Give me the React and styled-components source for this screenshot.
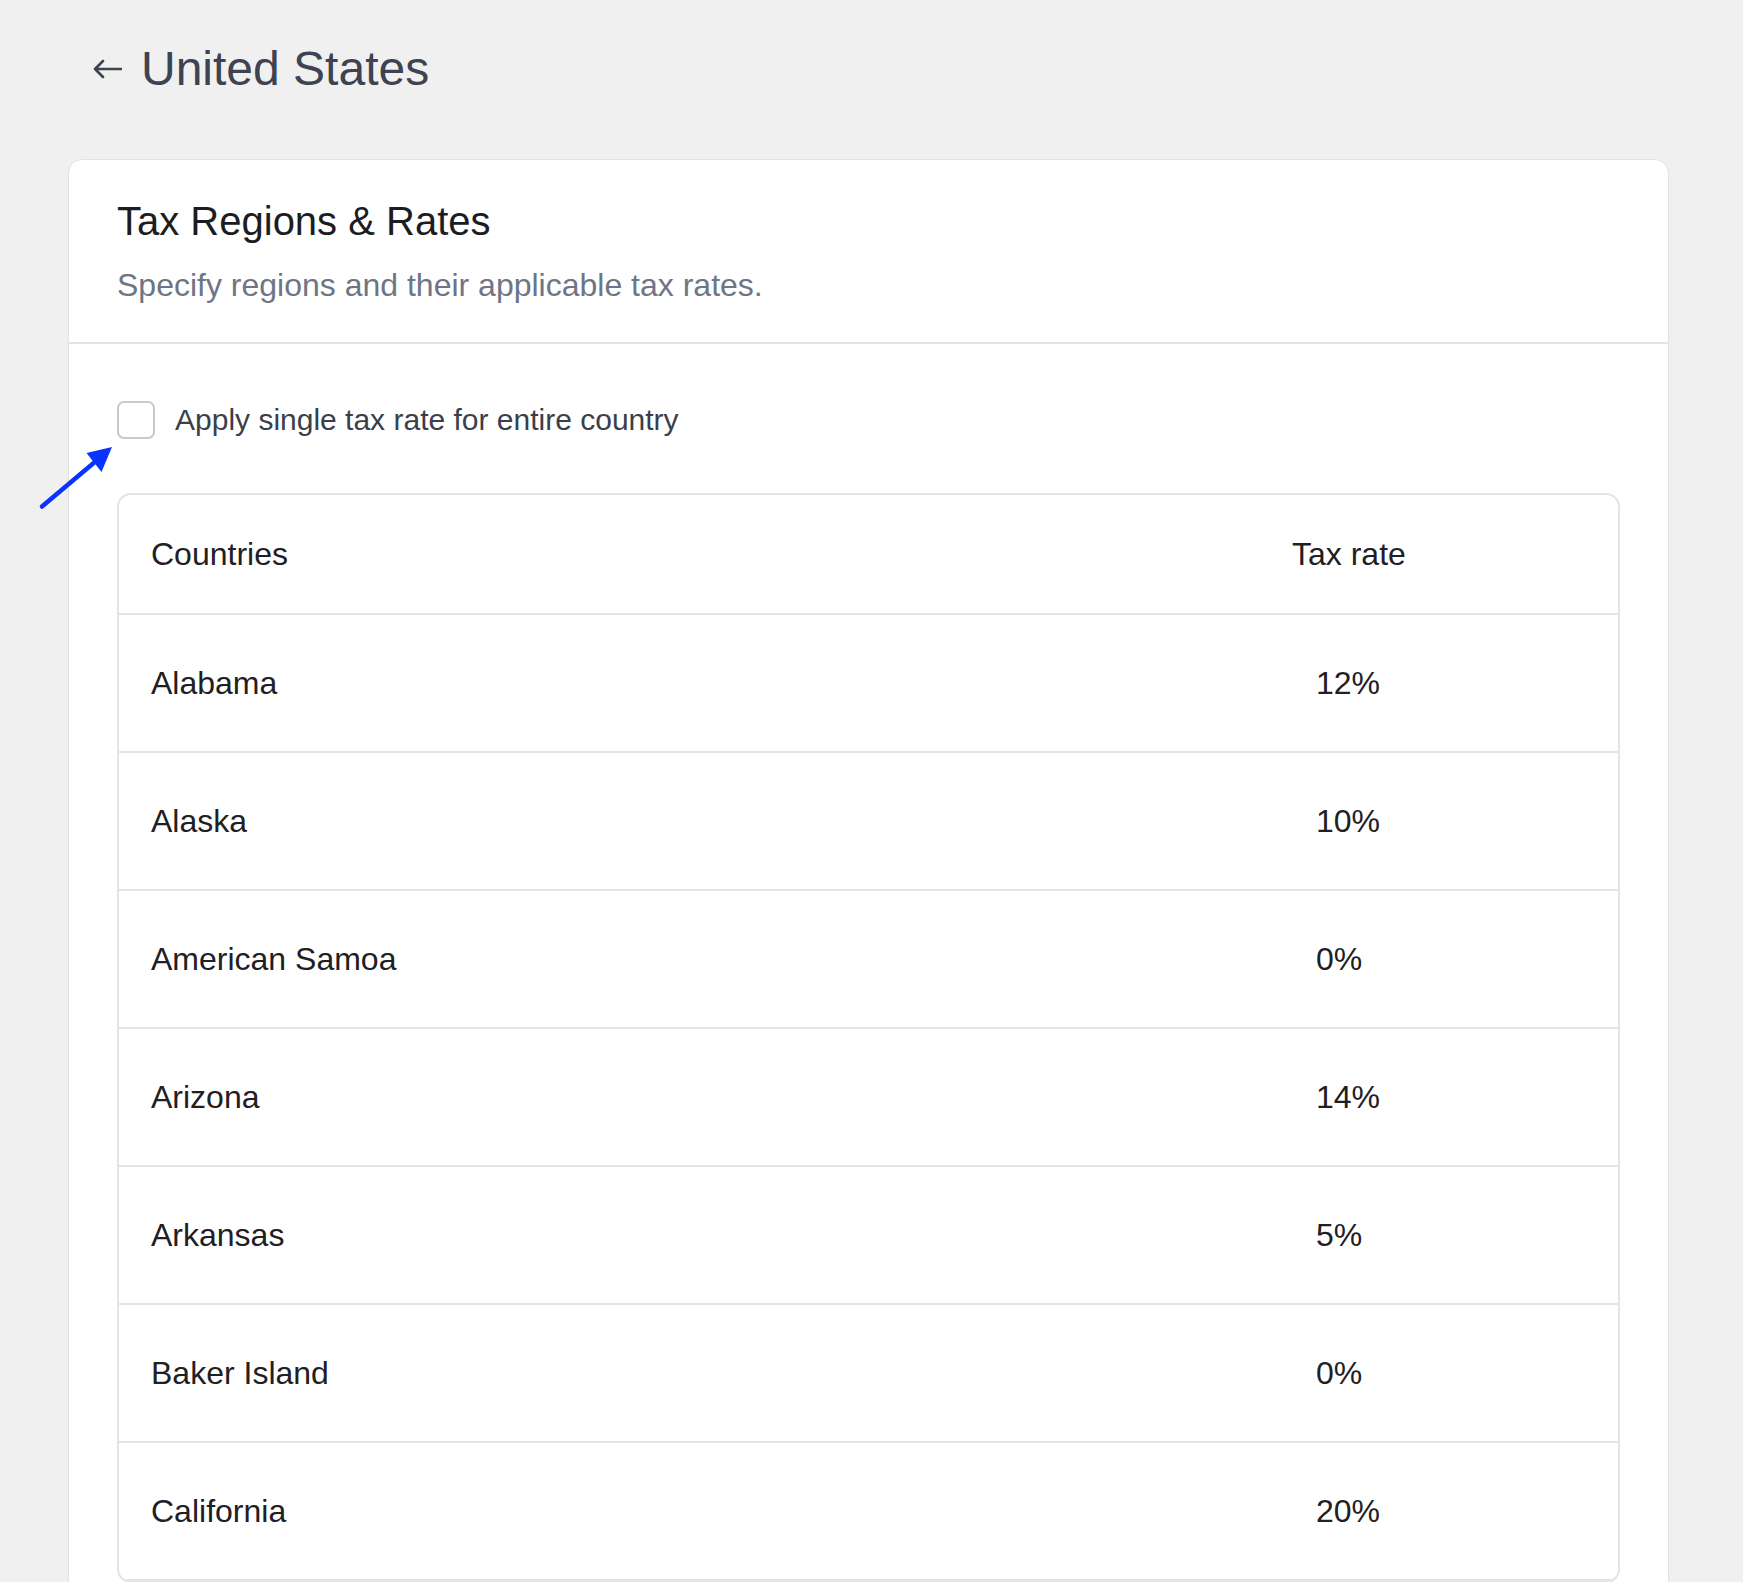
import React from "react";
import styled, { createGlobalStyle } from "styled-components";

const GlobalStyle = createGlobalStyle`
  html, body {
    margin: 0;
    padding: 0;
    background: #f0f0f0;
  }
  body {
    font-family: "Liberation Sans", Arial, Helvetica, sans-serif;
    -webkit-font-smoothing: antialiased;
  }
`;

const Page = styled.div`
  position: relative;
  min-height: 100vh;
  padding: 40px 74px 80px 68px;
  box-sizing: border-box;
  background: #f0f0f0;
`;

const Header = styled.div`
  display: flex;
  align-items: center;
  gap: 19px;
  padding-left: 25px;
  margin-bottom: 61px;
`;

const BackButton = styled.button`
  display: flex;
  align-items: center;
  padding: 0;
  border: none;
  background: transparent;
  cursor: pointer;
  color: #3d4350;
`;

const PageTitle = styled.h1`
  margin: 0;
  font-size: 48px;
  line-height: 1.2;
  font-weight: 400;
  color: #3d4350;
`;

const Card = styled.section`
  background: #ffffff;
  border: 1px solid #e3e3e3;
  border-radius: 14px;
  box-shadow: 0 1px 2px rgba(0, 0, 0, 0.04);
`;

const CardHeader = styled.div`
  padding: 37px 48px 33px;
  border-bottom: 2px solid #e1e4e9;
`;

const CardTitle = styled.h2`
  margin: 0;
  font-size: 40px;
  line-height: 48px;
  font-weight: 400;
  color: #1c1d21;
`;

const CardSubtitle = styled.p`
  margin: 16px 0 0;
  font-size: 32px;
  line-height: 48px;
  color: #6e7585;
`;

const CardBody = styled.div`
  padding: 52px 48px 48px;
`;

const CheckRow = styled.label`
  display: flex;
  align-items: center;
  gap: 20px;
  cursor: pointer;
`;

const CheckBox = styled.span`
  width: 38px;
  height: 38px;
  box-sizing: border-box;
  border: 2px solid #c7cacf;
  border-radius: 7px;
  background: ${(p) => (p.checked ? "#2f6fed" : "#ffffff")};
`;

const CheckLabel = styled.span`
  font-size: 30px;
  line-height: 48px;
  color: #3a3f4b;
`;

const Table = styled.div`
  margin-top: 49px;
  border: 2px solid #e1e4e9;
  border-radius: 14px;
  overflow: hidden;
`;

const Row = styled.div`
  display: grid;
  grid-template-columns: 1fr 358px;
  align-items: center;
  height: ${(p) => (p.head ? "118px" : "136px")};
  border-bottom: 2px solid #e1e4e9;
`;

const Cell = styled.div`
  padding-left: ${(p) => (p.value ? "56px" : "32px")};
  font-size: 32px;
  line-height: 40px;
  color: #1f2024;
`;

const Pointer = styled.svg`
  position: absolute;
  left: 36px;
  top: 440px;
  overflow: visible;
`;

const rows = [
  ["Alabama", "12%"],
  ["Alaska", "10%"],
  ["American Samoa", "0%"],
  ["Arizona", "14%"],
  ["Arkansas", "5%"],
  ["Baker Island", "0%"],
  ["California", "20%"],
];

export default function App() {
  const [checked, setChecked] = React.useState(false);

  return (
    <>
      <GlobalStyle />
      <Page>
        <Header>
          <BackButton aria-label="Back">
            <svg width="29" height="20" viewBox="0 0 29 20" fill="none">
              <path
                d="M28 10H2M10 2L2 10L10 18"
                stroke="currentColor"
                strokeWidth="2.6"
                strokeLinecap="round"
                strokeLinejoin="round"
              />
            </svg>
          </BackButton>
          <PageTitle>United States</PageTitle>
        </Header>

        <Card>
          <CardHeader>
            <CardTitle>Tax Regions &amp; Rates</CardTitle>
            <CardSubtitle>Specify regions and their applicable tax rates.</CardSubtitle>
          </CardHeader>
          <CardBody>
            <CheckRow onClick={() => setChecked(!checked)}>
              <CheckBox checked={checked} />
              <CheckLabel>Apply single tax rate for entire country</CheckLabel>
            </CheckRow>

            <Table>
              <Row head>
                <Cell>Countries</Cell>
                <Cell>Tax rate</Cell>
              </Row>
              {rows.map(([name, rate]) => (
                <Row key={name}>
                  <Cell>{name}</Cell>
                  <Cell value>{rate}</Cell>
                </Row>
              ))}
            </Table>
          </CardBody>
        </Card>

        <Pointer width="84" height="74" viewBox="0 0 84 74">
          <line
            x1="6"
            y1="66.5"
            x2="60"
            y2="21"
            stroke="#0a33ff"
            strokeWidth="4.5"
            strokeLinecap="round"
          />
          <polygon points="76,7 50.5,13 65.5,32" fill="#0a33ff" />
        </Pointer>
      </Page>
    </>
  );
}
